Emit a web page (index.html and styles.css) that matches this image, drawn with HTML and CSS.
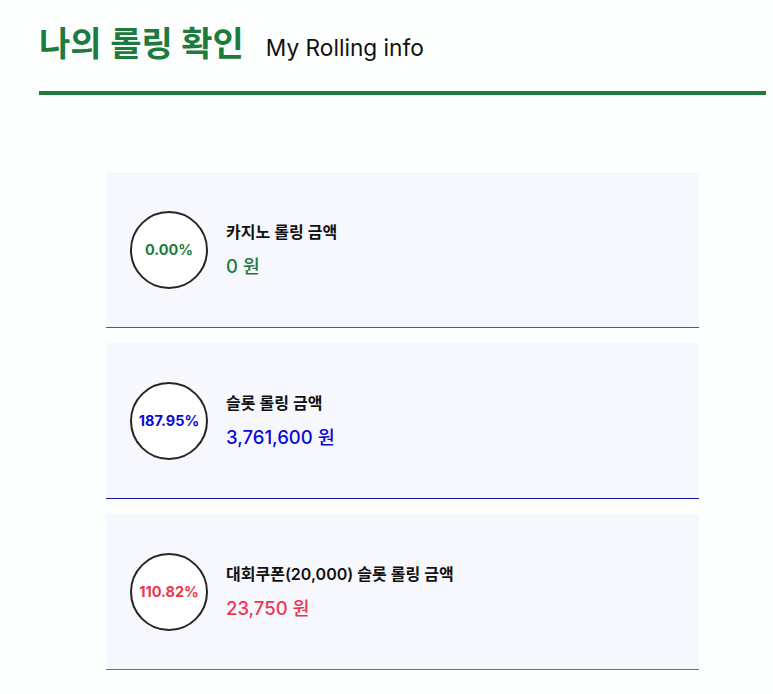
FILE: index.html
```html
<!DOCTYPE html>
<html lang="ko">
<head>
<meta charset="utf-8">
<link rel="stylesheet" href="styles.css">
</head>
<body>
<div class="page">
  <header class="head">
    <h1 class="title">나의 롤링 확인</h1>
    <span class="sub">My Rolling info</span>
  </header>
  <section class="list">
    <div class="card card-green">
      <div class="ring">0.00%</div>
      <div class="info">
        <div class="label">카지노 롤링 금액</div>
        <div class="amount">0 원</div>
      </div>
    </div>
    <div class="card card-blue">
      <div class="ring">187.95%</div>
      <div class="info">
        <div class="label">슬롯 롤링 금액</div>
        <div class="amount">3,761,600 원</div>
      </div>
    </div>
    <div class="card card-red">
      <div class="ring">110.82%</div>
      <div class="info">
        <div class="label">대회쿠폰(20,000) 슬롯 롤링 금액</div>
        <div class="amount">23,750 원</div>
      </div>
    </div>
  </section>
</div>
</body>
</html>
```

FILE: styles.css
```css
html, body {
  margin: 0;
  padding: 0;
  background: #fdfefe;
}
body {
  font-family: Inter, "Noto Sans CJK KR", sans-serif;
  color: #111;
}
.page {
  padding: 21px 7px 0 39px;
}
.head {
  display: flex;
  align-items: baseline;
  gap: 22px;
  height: 46px;
  border-bottom: 4px solid #1e7b3e;
  padding-bottom: 24px;
}
.title {
  margin: 0;
  font-size: 34px;
  font-weight: 600;
  color: #1e7b3e;
  line-height: 46px;
}
.sub {
  font-size: 22.7px;
  font-weight: 400;
  line-height: 30px;
  color: #111;
}
.list {
  width: 593px;
  margin: 77px auto 0;
  display: flex;
  flex-direction: column;
  gap: 15px;
}
.card {
  height: 155px;
  background: #f7f7fe;
  display: flex;
  align-items: center;
  padding-left: 24px;
  gap: 18px;
}
.ring {
  width: 74px;
  height: 74px;
  border: 2.5px solid #262626;
  border-radius: 50%;
  background: #fff;
  display: flex;
  align-items: center;
  justify-content: center;
  font-size: 14.5px;
  font-weight: 700;
  flex: none;
}
.info {
  display: flex;
  flex-direction: column;
  gap: 10px;
}
.label {
  font-size: 16px;
  font-weight: 600;
  color: #111;
  line-height: 22px;
}
.amount {
  font-size: 18.5px;
  font-weight: 500;
  line-height: 26px;
}
.card-green { border-bottom: 1px solid #1e7b3e; }
.card-green .ring, .card-green .amount { color: #1e7b3e; }
.card-blue { border-bottom: 1px solid #1a1aa0; }
.card-blue .ring, .card-blue .amount { color: #0a0ad6; }
.card-red { border-bottom: 1px solid #e8384f; }
.card-red .ring, .card-red .amount { color: #ec3650; }
```
